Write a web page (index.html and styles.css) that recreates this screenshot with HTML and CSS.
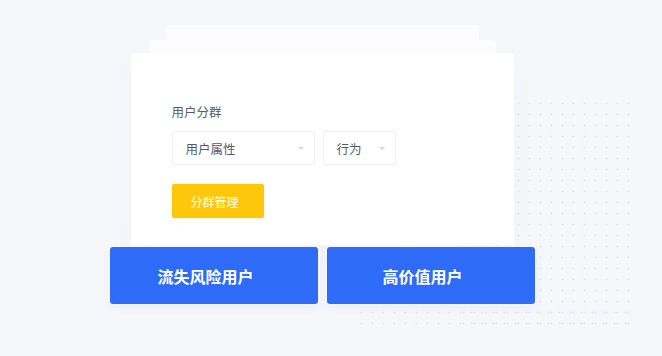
FILE: index.html
```html
<!DOCTYPE html>
<html lang="zh">
<head>
<meta charset="utf-8">
<link rel="stylesheet" href="styles.css">
</head>
<body>
<div class="dots dots-side"></div>
<div class="dots dots-bottom"></div>
<main class="stage">
  <div class="layer layer-back"></div>
  <div class="layer layer-mid"></div>
  <section class="card">
    <div class="label">用户分群</div>
    <div class="selects">
      <div class="select select-wide"><span>用户属性</span><i class="caret"></i></div>
      <div class="select select-narrow"><span>行为</span><i class="caret"></i></div>
    </div>
    <button class="btn-yellow">分群管理</button>
  </section>
  <div class="actions">
    <div class="btn-blue">流失风险用户</div>
    <div class="btn-blue">高价值用户</div>
  </div>
</main>
</body>
</html>
```
FILE: styles.css
```css
html, body {
  margin: 0;
  padding: 0;
}
body {
  background: #f6f7fb;
  width: 662px;
  height: 356px;
  overflow: hidden;
  font-family: "Noto Sans CJK SC", "Noto Sans", sans-serif;
}
.dots {
  position: absolute;
  z-index: -1;
  background-image: radial-gradient(circle, #e3e5ee 0.8px, transparent 1.2px);
  background-size: 11px 11px;
}
.dots-side {
  left: 458px;
  top: 98px;
  width: 178px;
  height: 236px;
}
.dots-bottom {
  left: 356px;
  top: 307px;
  width: 280px;
  height: 26px;
}
.stage {
  width: 644px;
  padding-top: 25px;
  display: flex;
  flex-direction: column;
  align-items: center;
}
.layer {
  background: #fcfcfe;
}
.layer-back {
  width: 313px;
  height: 15px;
  border-radius: 3px 3px 0 0;
}
.layer-mid {
  width: 347px;
  height: 13px;
  border-radius: 3px 3px 0 0;
  background: #fdfdff;
}
.card {
  width: 383px;
  box-sizing: border-box;
  height: 192px;
  padding: 50px 0 0 41px;
  background: rgba(255, 255, 255, 0.92);
  border-radius: 3px 3px 0 0;
  box-shadow: 0 6px 22px rgba(60, 80, 140, 0.03);
}
.label {
  font-size: 12.5px;
  line-height: 18px;
  color: #585c68;
}
.selects {
  display: flex;
  gap: 8px;
  margin-top: 10px;
}
.select {
  height: 34px;
  box-sizing: border-box;
  border: 1px solid #eff0f3;
  border-radius: 2px;
  display: flex;
  align-items: center;
  justify-content: space-between;
  padding: 0 10px 0 13px;
  font-size: 12.5px;
  color: #555a66;
  background: #fff;
}
.select-wide { width: 143px; }
.select-narrow { width: 73px; }
.caret {
  width: 0;
  height: 0;
  border-left: 3px solid transparent;
  border-right: 3px solid transparent;
  border-top: 3px solid #d4d6dc;
}
.btn-yellow {
  display: block;
  margin-top: 19px;
  width: 92px;
  height: 34px;
  border: 0;
  border-radius: 2px;
  background: #ffc70b;
  color: #fff;
  font-family: inherit;
  font-size: 12px;
  padding: 0 6px 0 0;
  box-shadow: 0 2px 6px rgba(255, 199, 11, 0.12);
}
.actions {
  display: flex;
  gap: 9px;
  margin-top: 2px;
}
.btn-blue {
  width: 208px;
  height: 57px;
  box-sizing: border-box;
  padding-right: 16px;
  display: flex;
  align-items: center;
  justify-content: center;
  background: #2e6cf7;
  border-radius: 3px;
  color: #fff;
  font-size: 16px;
  font-weight: 700;
  box-shadow: 0 0 0 2px rgba(255, 255, 255, 0.3), 0 3px 10px rgba(60, 90, 170, 0.07);
}
```
